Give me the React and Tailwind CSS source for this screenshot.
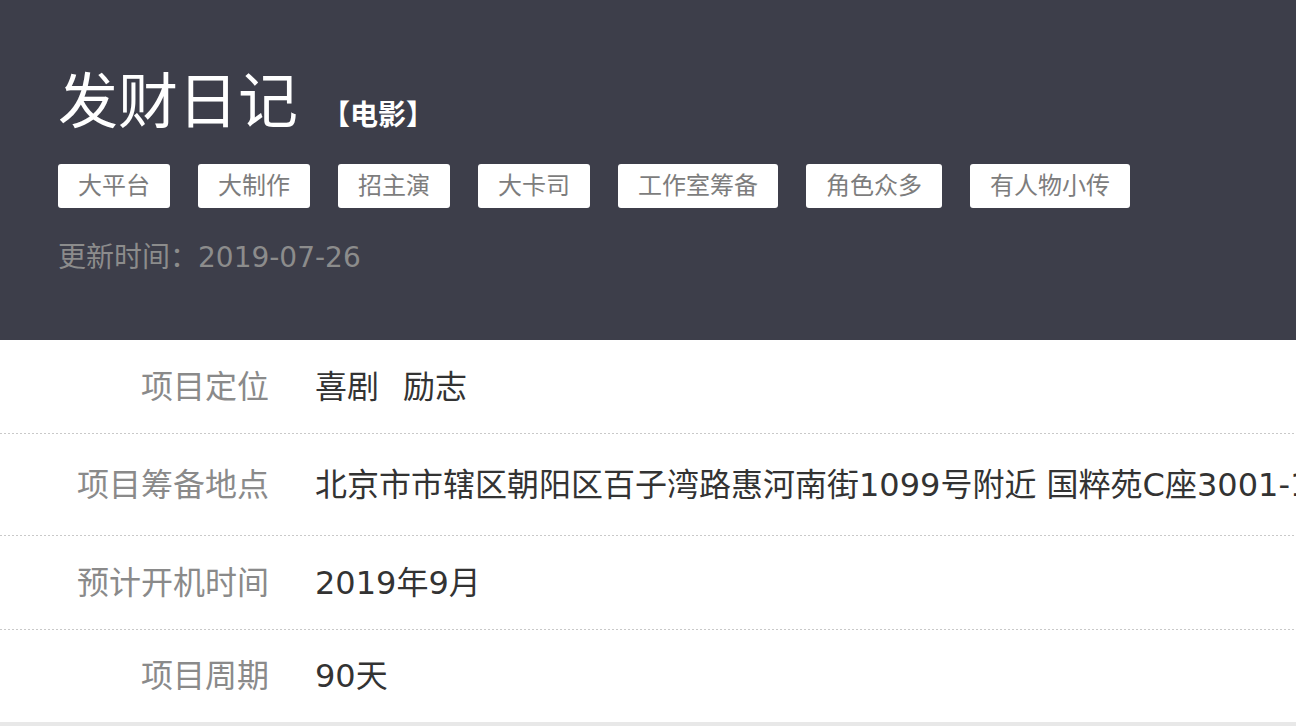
import React from 'react';

const tags = ['大平台', '大制作', '招主演', '大卡司', '工作室筹备', '角色众多', '有人物小传'];

const rows = [
  { label: '项目定位', value: ['喜剧', '励志'], h: 'h-[93px]' },
  { label: '项目筹备地点', value: ['北京市市辖区朝阳区百子湾路惠河南街1099号附近 国粹苑C座3001-1室'], h: 'h-[101px]' },
  { label: '预计开机时间', value: ['2019年9月'], h: 'h-[93px]' },
  { label: '项目周期', value: ['90天'], h: 'h-[92px]' },
];

// 虚线分隔
const Dots = () => (
  <div className="h-px bg-[linear-gradient(to_right,#c9c9c9_50%,transparent_50%)] bg-[length:4px_1px]" />
);

const App = () => {
  return (
    <div
      className="w-[1296px] h-[726px] overflow-hidden bg-[#e8e8e8]"
      style={{ fontFamily: '"DejaVu Sans", "Noto Sans CJK SC", sans-serif' }}
    >
      {/* 头部 */}
      <div className="h-[340px] bg-[#3d3e4a] pl-[58px] pt-[72px]">
        <div className="flex items-end leading-none">
          <h1 className="text-[60px] leading-none text-white font-normal">发财日记</h1>
          <span
            className="ml-[24px] mb-[5px] text-[28px] font-bold text-white leading-none"
            style={{ fontFamily: '"Noto Sans CJK SC", sans-serif' }}
          >
            【电影】
          </span>
        </div>
        <div className="flex gap-[28px] mt-[32px]">
          {tags.map((t) => (
            <span
              key={t}
              className="h-[44px] px-[20px] flex items-center bg-white rounded-[3px] text-[24px] text-[#7d7d7d]"
            >
              {t}
            </span>
          ))}
        </div>
        <p className="mt-[36px] text-[28px] leading-none text-[#8c8c8c]">更新时间：2019-07-26</p>
      </div>

      {/* 详情 */}
      <div className="bg-white">
        {rows.map((r, i) => (
          <div key={r.label}>
            <div className={`${r.h} flex items-center`}>
              <div className="w-[269px] shrink-0 text-right text-[32px] text-[#8a8a8a]">{r.label}</div>
              <div className="pl-[46px] flex gap-[24px] text-[32px] text-[#333333] whitespace-nowrap overflow-hidden">
                {r.value.map((v) => (
                  <span key={v}>{v}</span>
                ))}
              </div>
            </div>
            {i < rows.length - 1 && <Dots />}
          </div>
        ))}
      </div>
    </div>
  );
};

export default App;
